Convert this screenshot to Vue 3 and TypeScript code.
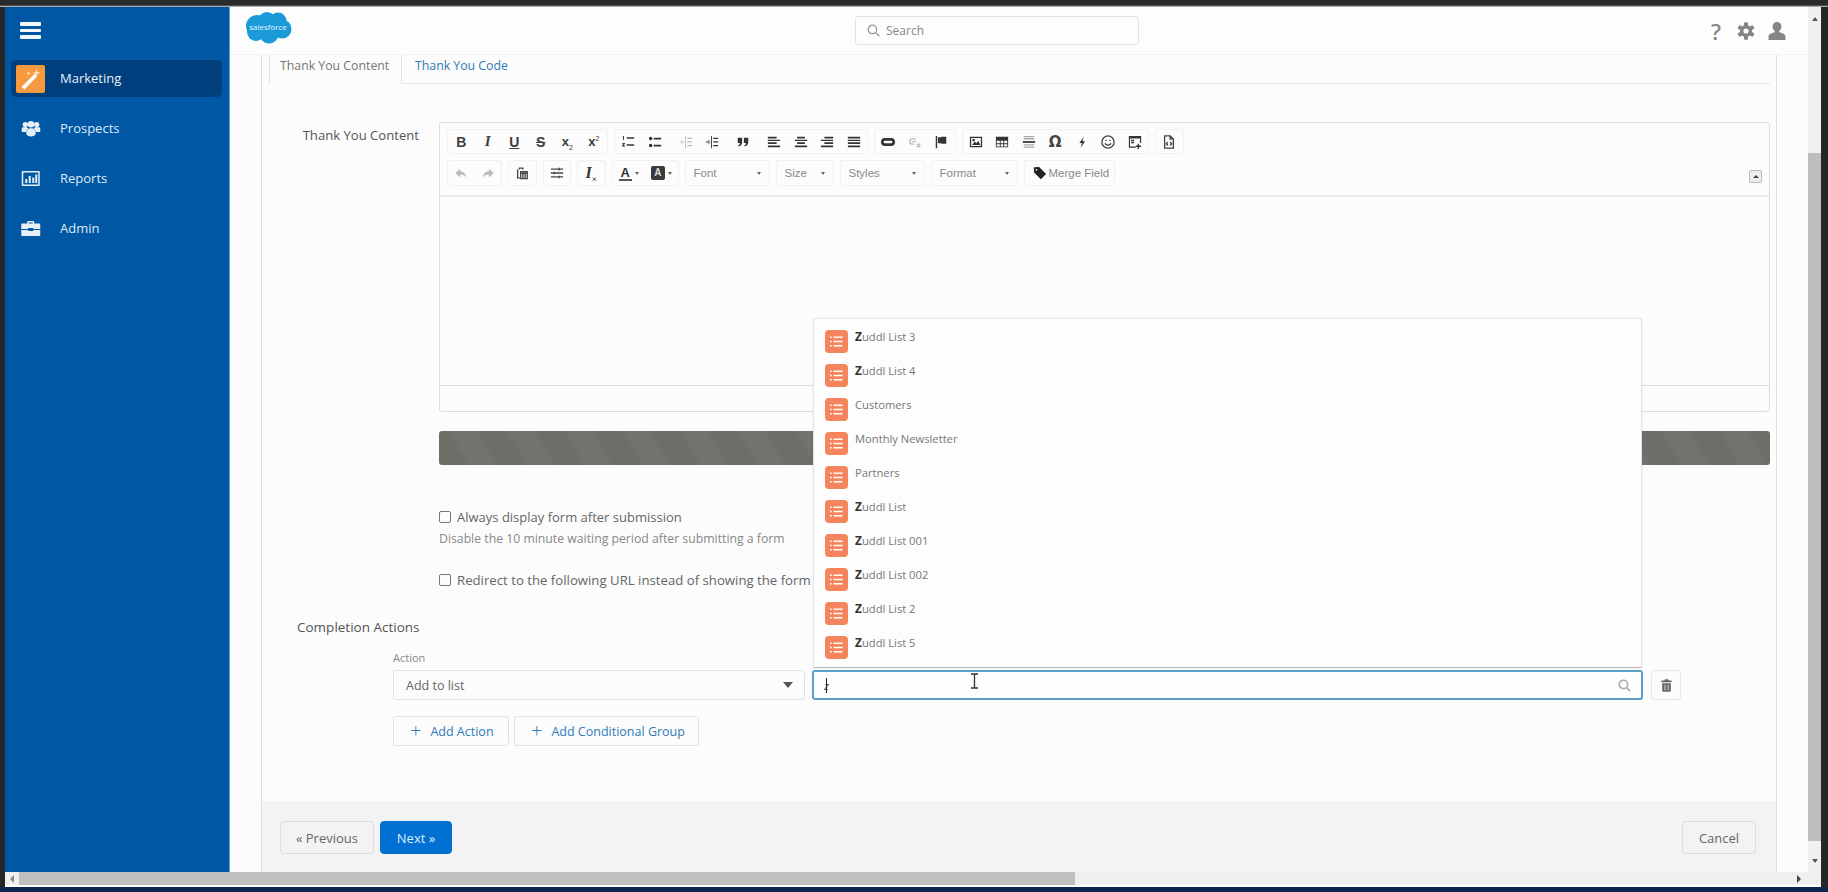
<script setup lang="ts">
interface Tool { t?: string; sub?: string; sup?: string; c?: string; d?: string; d2?: string; s?: boolean; dim?: boolean; sep?: boolean }

const undo = 'M7 3L1.5 8 7 13V10c3 0 5 .5 7 3-.5-4-3-7-7-7z'
const redo = 'M9 3l5.5 5L9 13V10c-3 0-5 .5-7 3 .5-4 3-7 7-7z'

const row1: Tool[][] = [
  [
    { t: 'B', c: 'bold' }, { t: 'I', c: 'ital' }, { t: 'U', c: 'under' }, { t: 'S', c: 'strike' },
    { t: 'x', sub: '2', c: 'scr' }, { t: 'x', sup: '2', c: 'scr' }
  ],
  [
    { d: 'M6.5 2.5h8.5v1.7H6.5zM6.5 10.5h8.5v1.7H6.5zM2.2 1h1.2v4.5H2.2zM1.3 9h3.2v1L2.8 12h1.8v1H1.2v-1l1.8-2H1.3z' },
    { d: 'M6.5 3h8.5v2H6.5zM6.5 11h8.5v2H6.5zM3 2a2 2 0 1 1 0 4 2 2 0 0 1 0-4zM3 10a2 2 0 1 1 0 4 2 2 0 0 1 0-4z' },
    { sep: true, dim: true, d: 'M7 1h1v14H7zM1 7.5h5v1H1zM9.5 3h5.5v1.5H9.5zM9.5 7.2h5.5v1.5H9.5zM9.5 11.4h5.5v1.5H9.5zM1 8l2.5-2.5v5z' },
    { d: 'M7 1h1v14H7zM1 7.5h5v1H1zM9.5 3h5.5v1.5H9.5zM9.5 7.2h5.5v1.5H9.5zM9.5 11.4h5.5v1.5H9.5zM6.5 8L4 5.5v5z' },
    { sep: true, d: 'M2 3h5v5c0 3-2 5-4 5l-.6-1c1.4-.6 2-1.6 2-3H2zM9 3h5v5c0 3-2 5-4 5l-.6-1c1.4-.6 2-1.6 2-3H9z' },
    { sep: true, d: 'M1 2h10v2H1zM1 5.4h14v1.4H1zM1 8.2h10v2H1zM1 12h14v2H1z' },
    { d: 'M3.5 2h9v2h-9zM1 5.4h14v1.4H1zM3.5 8.2h9v2h-9zM1 12h14v2H1z' },
    { d: 'M5 2h10v2H5zM1 5.4h14v1.4H1zM5 8.2h10v2H5zM1 12h14v2H1z' },
    { d: 'M1 2h14v2H1zM1 5.4h14v1.4H1zM1 8.2h14v2H1zM1 12h14v2H1z' }
  ],
  [
    { d: 'M4.5 3.5h7a4.5 4.5 0 0 1 0 9h-7a4.5 4.5 0 0 1 0-9zM4.5 6.500a1.500 1.500 0 0 0 0 3h7a1.500 1.500 0 0 0 0-3z' },
    { s: true, dim: true, d: 'M9 4.500H5a3 3 0 0 0 0 6h2M5 7.500h4M10 10l4 4M14 10l-4 4' },
    { d: 'M2 1h1.600v14H2zM4.500 2.500h4V2H14v8H8.500v-.5h-4z' }
  ],
  [
    { d: 'M1 2h14v12H1zM2.500 3.500v9h11v-9zM3.500 11.500l3-4 2 2 2-3 2.500 5zM4 4.500h2.500V7H4z' },
    { d: 'M1 2h14v12H1zM2 6.500v3h3.500v-3zM6.500 6.500v3h3v-3zM10.500 6.500v3H14v-3zM2 10.500V13h3.500v-2.500zM6.500 10.500V13h3v-2.500zM10.500 10.500V13H14v-2.500z' },
    { d: 'M1 7h14v2H1z', d2: 'M2 1h12v1.500H2zM2 3.500h12V5H2zM2 10.500h12V12H2zM2 13h12v1.500H2z' },
    { t: 'Ω', c: 'omega' },
    { d: 'M10 2L5 9h3l-1.600 5.500L11.500 7H8.400z' },
    { s: true, d: 'M8 1a7 7 0 1 0 0 14A7 7 0 0 0 8 1zM4.600 9.500c1 2.700 5.800 2.700 6.800 0M5.700 5.500v1.400M10.300 5.500v1.400' },
    { d: 'M1 1h14v8h-1.300V4H2.300v9H9v1.500H1zM3.500 5.500H7V7H3.500zM3.500 8H7v1.500H3.500zM11 10h1.600v2H15v1.600h-2.400V16H11v-2.400H9V12h2z' }
  ],
  [
    { s: true, d: 'M3 1h6.500L13 4.500V15H3zM9.300 1v3.700H13M6.600 8L5 10l1.600 2M9.400 8L11 10l-1.600 2' }
  ]
]

const row2: Tool[][] = [
  [{ dim: true, d: undo }, { dim: true, d: redo }],
  [{ s: true, d: 'M3 4v9.500h2.500M5 4V2.500h4V4M6.500 6.500H14v8H6.500zM9 7v7M11.500 7v7M6.500 8.500H14' }],
  [{ s: true, d: 'M1 3.500h14M1 8h14M1 12.500h14M10.500 2v3M5 6.500v3M10.500 11v3' }],
  [{ t: 'I', sub: '×', c: 'clear' }]
]

const combos = [
  { label: 'Font', w: 85 },
  { label: 'Size', w: 58 },
  { label: 'Styles', w: 85 },
  { label: 'Format', w: 87 }
]

const nav = [
  { label: 'Prospects', d: 'M4 3a2.600 2.600 0 1 1 0 5.200A2.600 2.600 0 0 1 4 3zM15.500 3a2.600 2.600 0 1 1 0 5.200 2.600 2.600 0 0 1 0-5.200zM9.750 2a3.300 3.300 0 1 1 0 6.600 3.300 3.300 0 0 1 0-6.600zM.5 9.500c0-.8.8-1.200 1.800-1.200h3.400c.8.800 1.500 1.200 1.500 1.200-1.500.8-2.200 2-2.200 3.500H.5zM19 9.500c0-.8-.8-1.200-1.800-1.200h-3.400c-.8.800-1.500 1.200-1.500 1.200 1.500.8 2.200 2 2.200 3.500H19zM5 15c0-4 2-5.700 4.750-5.700S14.500 11 14.500 15c-.5 1.200-2.500 2.500-4.750 2.500S5.500 16.200 5 15z', e: false },
  { label: 'Reports', d: 'M1.500 2h16a1 1 0 0 1 1 1v13a1 1 0 0 1-1 1h-16a1 1 0 0 1-1-1V3a1 1 0 0 1 1-1zM2 3.500v12h15v-12zM4 10h2v4H4zM7.500 7h2v7h-2zM11 8.500h2V14h-2zM14 5.500h2V14h-2z', e: true },
  { label: 'Admin', d: 'M7 2h5a1 1 0 0 1 1 1v1.500h5a1 1 0 0 1 1 1V10H12V9H7v1H0V5.500a1 1 0 0 1 1-1h5V3a1 1 0 0 1 1-1zM7.500 3.400v1.100h4V3.400zM0 11h7v1h5v-1h7v5a1 1 0 0 1-1 1H1a1 1 0 0 1-1-1z', e: true }
]

const results = [
  { z: 'Z', rest: 'uddl List 3' },
  { z: 'Z', rest: 'uddl List 4' },
  { z: '', rest: 'Customers' },
  { z: '', rest: 'Monthly Newsletter' },
  { z: '', rest: 'Partners' },
  { z: 'Z', rest: 'uddl List' },
  { z: 'Z', rest: 'uddl List 001' },
  { z: 'Z', rest: 'uddl List 002' },
  { z: 'Z', rest: 'uddl List 2' },
  { z: 'Z', rest: 'uddl List 5' }
]
</script>

<template>
  <div class="frame">
    <div class="strip-top"></div>
    <div class="middle">
      <div class="app">
        <div class="upper">
          <aside class="sidebar">
            <div class="burger"><i></i><i></i><i></i></div>
            <div class="nav-item active">
              <span class="wand">
                <svg viewBox="0 0 28 28" width="29" height="28">
                  <path d="M5 22L18 9l2.500 2.500L8 24.500z" fill="#fff" />
                  <path d="M20 4l1 3 3 1-3 1-1 3-1-3-3-1 3-1zM12 6l.6 1.600 1.600.6-1.600.6-.6 1.600-.6-1.600-1.600-.6 1.600-.6z" fill="#ffe3c2" />
                </svg>
              </span>
              <span class="nav-label">Marketing</span>
            </div>
            <div v-for="n in nav" :key="n.label" class="nav-item">
              <span class="nav-icon">
                <svg viewBox="0 0 19.500 19" width="20" height="19"><path :d="n.d" :fill-rule="n.e ? 'evenodd' : 'nonzero'" fill="#e6eef7" /></svg>
              </span>
              <span class="nav-label">{{ n.label }}</span>
            </div>
          </aside>

          <div class="main-col">
            <header class="topbar">
              <svg class="logo" viewBox="0 0 48 33" width="48" height="33">
                <g fill="#1a9ad9">
                  <circle cx="13" cy="15" r="11" /><circle cx="23" cy="10" r="9" /><circle cx="34" cy="10" r="8.500" />
                  <circle cx="38" cy="18" r="9.500" /><circle cx="25" cy="23" r="9.500" /><circle cx="12" cy="21" r="9" />
                </g>
                <text x="24" y="19" text-anchor="middle" class="logo-text">salesforce</text>
              </svg>
              <div class="search">
                <svg viewBox="0 0 16 16" width="13" height="13"><path d="M6.700 1.500a5.200 5.200 0 1 0 0 10.400 5.200 5.200 0 0 0 0-10.400zM10.500 10.500L15 15" fill="none" stroke="#999" stroke-width="1.600" /></svg>
                <span>Search</span>
              </div>
              <div class="top-icons">
                <span class="help">?</span>
                <svg viewBox="0 0 18 18" width="18" height="18">
                  <g fill="#858585">
                    <rect x="7" y="0.300" width="4" height="17.400" rx="1" />
                    <rect x="7" y="0.300" width="4" height="17.400" rx="1" transform="rotate(60 9 9)" />
                    <rect x="7" y="0.300" width="4" height="17.400" rx="1" transform="rotate(120 9 9)" />
                  </g>
                  <circle cx="9" cy="9" r="4.800" fill="none" stroke="#858585" stroke-width="2.600" />
                  <circle cx="9" cy="9" r="2.600" fill="#fcfcfc" />
                </svg>
                <svg viewBox="0 0 18 18" width="18" height="18"><path d="M9 0a4.400 4.400 0 0 1 4.400 4.600c0 2-1 3.600-2.200 4.400v1.200c2.800.8 6.300 1.800 6.300 4.300V18H.5v-3.500c0-2.500 3.500-3.500 6.300-4.300V9c-1.200-.8-2.200-2.400-2.200-4.400A4.400 4.400 0 0 1 9 0z" fill="#858585" /></svg>
              </div>
            </header>

            <div class="scroller">
              <section class="panel">
                <div class="tabs">
                  <div class="tab active-tab">Thank You Content</div>
                  <div class="tab">Thank You Code</div>
                </div>

                <div class="form">
                  <div class="editor-row">
                    <label class="field-label">Thank You Content</label>
                    <div class="editor">
                      <div class="toolbar">
                        <div class="tb-row">
                          <div v-for="(g, gi) in row1" :key="gi" class="tb-group">
                            <div v-for="(b, bi) in g" :key="bi" class="tb-btn" :class="{ sep: b.sep }">
                              <svg v-if="b.d" viewBox="0 0 16 16" width="14" height="14" :class="{ dim: b.dim, line: b.s }">
                                <path v-if="b.d2" :d="b.d2" class="faint" />
                                <path :d="b.d" fill-rule="evenodd" />
                              </svg>
                              <span v-else :class="b.c">{{ b.t }}<sub v-if="b.sub">{{ b.sub }}</sub><sup v-if="b.sup">{{ b.sup }}</sup></span>
                            </div>
                          </div>
                        </div>
                        <div class="tb-row second">
                          <div v-for="(g, gi) in row2" :key="gi" class="tb-group">
                            <div v-for="(b, bi) in g" :key="bi" class="tb-btn" :class="{ sep: b.sep }">
                              <svg v-if="b.d" viewBox="0 0 16 16" width="14" height="14" :class="{ dim: b.dim, line: b.s }">
                                <path :d="b.d" fill-rule="evenodd" />
                              </svg>
                              <span v-else :class="b.c">{{ b.t }}<sub v-if="b.sub">{{ b.sub }}</sub></span>
                            </div>
                          </div>
                          <div class="tb-group colors">
                            <div class="color-btn"><span class="a-under">A</span><i class="mini-caret"></i></div>
                            <div class="color-btn"><span class="a-box">A</span><i class="mini-caret"></i></div>
                          </div>
                          <div v-for="c in combos" :key="c.label" class="tb-group combo" :style="{ width: c.w + 'px' }">
                            <span>{{ c.label }}</span><i class="mini-caret"></i>
                          </div>
                          <div class="tb-group merge">
                            <svg viewBox="0 0 16 16" width="14" height="14"><path d="M1 1.500l6-.5 8 8.200L9 15 1.200 7.500zM4 3.300a1 1 0 1 0 0 2 1 1 0 0 0 0-2z" fill="#222" fill-rule="evenodd" /></svg>
                            <span>Merge Field</span>
                          </div>
                        </div>
                        <div class="collapse"><i></i></div>
                      </div>
                      <div class="edit-area"></div>
                      <div class="edit-foot"></div>
                    </div>
                  </div>

                  <div class="stripe-bar"></div>

                  <div class="checks">
                    <div class="check-row"><span class="box"></span><span>Always display form after submission</span></div>
                    <div class="help-text">Disable the 10 minute waiting period after submitting a form</div>
                    <div class="check-row second-check"><span class="box"></span><span>Redirect to the following URL instead of showing the form</span></div>
                  </div>

                  <h3 class="section-title">Completion Actions</h3>

                  <div class="actions">
                    <div class="action-label">Action</div>
                    <div class="action-row">
                      <div class="select"><span>Add to list</span><i class="select-caret"></i></div>
                      <div class="lookup">
                        <span class="typed">z</span><i class="caret-bar"></i>
                        <svg class="lookup-icon" viewBox="0 0 16 16" width="13" height="13"><path d="M6.700 1.500a5.200 5.200 0 1 0 0 10.400 5.200 5.200 0 0 0 0-10.400zM10.500 10.500L15 15" fill="none" stroke="#aaa" stroke-width="2" /></svg>
                        <ul class="results">
                          <li v-for="(r, i) in results" :key="i">
                            <span class="list-icon">
                              <svg viewBox="0 0 23 23" width="23" height="23">
                                <path d="M8.500 6.500h9v1.600h-9zM8.500 10.700h9v1.600h-9zM8.500 14.900h9v1.600h-9zM5 6.500h1.800v1.600H5zM5 10.700h1.800v1.600H5zM5 14.900h1.800v1.600H5z" fill="#fff" />
                              </svg>
                            </span>
                            <span class="r-text"><b v-if="r.z">{{ r.z }}</b>{{ r.rest }}</span>
                          </li>
                        </ul>
                        <svg class="ibeam" viewBox="0 0 9 16" width="9" height="16"><path d="M1 1h7M1 15h7M4.500 1v14" fill="none" stroke="#333" stroke-width="1.300" /></svg>
                      </div>
                      <div class="trash">
                        <svg viewBox="0 0 14 16" width="11" height="13"><path d="M5 0h4l.6 1.500h3.900V4H.5V1.500h3.900zM1.500 5h11v10a1 1 0 0 1-1 1h-9a1 1 0 0 1-1-1zM4.500 7v7h1V7zM8.500 7v7h1V7z" fill="#666" fill-rule="evenodd" /></svg>
                      </div>
                    </div>
                    <div class="add-row">
                      <div class="add-btn add-a"><span class="plus">+</span>Add Action</div>
                      <div class="add-btn add-c"><span class="plus">+</span>Add Conditional Group</div>
                    </div>
                  </div>
                </div>

                <footer class="foot">
                  <div class="btn prev">« Previous</div>
                  <div class="btn next">Next »</div>
                  <div class="btn cancel">Cancel</div>
                </footer>
              </section>
            </div>
          </div>

          <div class="vscroll">
            <i class="arrow up"></i>
            <div class="v-thumb"></div>
            <i class="arrow down"></i>
          </div>
        </div>

        <div class="hscroll">
          <i class="arrow left"></i>
          <div class="h-thumb"></div>
          <i class="arrow right"></i>
        </div>
      </div>
    </div>
    <div class="strip-bottom"></div>
  </div>
</template>

<style scoped>
.frame {
  width: 1828px;
  height: 892px;
  display: flex;
  flex-direction: column;
  background: #262626;
  font-family: "Open Sans", "Noto Sans", sans-serif;
  overflow: hidden;
}
.strip-top { height: 7px; flex: none; background: linear-gradient(#2b2b2b 5px, #777 6px, #ddd 7px); }
.strip-bottom { height: 5px; flex: none; background: #0d2650; }
.middle { flex: 1; min-height: 0; display: flex; padding: 0 7px 0 5px; }
.app { flex: 1; min-width: 0; display: flex; flex-direction: column; background: #fcfcfc; }
.upper { flex: 1; min-height: 0; display: flex; }

.sidebar { width: 225px; flex: none; background: #0058a5; padding: 0 7px 0 6px; box-sizing: border-box; border-right: 1px solid #5ea2dc; }
.burger { height: 53px; padding: 15px 0 0 9px; box-sizing: border-box; display: flex; flex-direction: column; gap: 3px; }
.burger i { display: block; width: 21px; height: 3.5px; background: #f2f6fa; border-radius: 1px; }
.nav-item { height: 37px; margin-bottom: 13px; display: flex; align-items: center; padding-left: 5px; color: #dfeaf5; font-size: 13px; border-radius: 5px; }
.nav-item.active { background: #003f7d; color: #e8eff7; }
.wand { width: 29px; height: 28px; background: #f6993f; border-radius: 2px; display: flex; flex: none; }
.nav-icon { width: 29px; display: flex; justify-content: center; flex: none; }
.nav-label { margin: -2px 0 0 15px; }

.main-col { flex: 1; min-width: 0; display: flex; flex-direction: column; }
.topbar { height: 47px; flex: none; display: flex; align-items: center; padding: 0 22px 0 14px; border-bottom: 1px solid #f2f2f2; background: #fdfdfd; }
.logo { flex: none; margin-top: -7px; }
.logo-text { font-family: "Open Sans", sans-serif; font-size: 8px; fill: #e9f6fc; }
.search { width: 284px; height: 29px; box-sizing: border-box; margin-left: 563px; border: 1px solid #e3e3e3; border-radius: 3px; display: flex; align-items: center; padding-left: 11px; gap: 6px; font-size: 12px; color: #888; }
.top-icons { margin-left: auto; display: flex; align-items: center; gap: 13px; }
.help { font-size: 22px; font-weight: 600; color: #888; line-height: 1; width: 16px; text-align: center; }

.scroller { flex: 1; min-height: 0; padding: 0 31px; }
.panel { height: 100%; box-sizing: border-box; border-left: 1px solid #ddd; border-right: 1px solid #ddd; display: flex; flex-direction: column; }
.tabs { height: 29px; flex: none; box-sizing: border-box; margin: 0 6px 0 7px; display: flex; border-bottom: 1px solid #e5e5e5; font-size: 12.3px; white-space: nowrap; }
.tab { padding: 0 13px; line-height: 22px; color: #2e7bb8; height: 29px; box-sizing: border-box; }
.active-tab { color: #777; border-left: 1px solid #e2e2e2; border-right: 1px solid #e2e2e2; background: #fcfcfc; width: 133px; padding: 0 10px; }

.form { flex: 1; min-height: 0; padding: 38px 6px 0 0; display: flex; flex-direction: column; }
.editor-row { display: flex; }
.field-label { width: 157px; margin-right: 20px; text-align: right; font-size: 13.1px; color: #555; padding-top: 4px; flex: none; }
.editor { flex: 1; height: 290px; box-sizing: border-box; border: 1px solid #ddd; border-radius: 3px; display: flex; flex-direction: column; }
.toolbar { position: relative; height: 74px; flex: none; box-sizing: border-box; padding: 6px 0 0 7px; border-bottom: 2px solid #ececec; }
.tb-row { display: flex; gap: 6px; height: 25px; }
.tb-row.second { margin-top: 6px; height: 26px; gap: 6px; }
.tb-group { display: flex; align-items: center; border: 1px solid #f1f1f1; border-radius: 3px; box-sizing: border-box; height: 100%; }
.tb-btn { width: 26.5px; height: 100%; display: flex; align-items: center; justify-content: center; flex: none; color: #3c3c3c; }
.tb-btn.sep { margin-left: 4.5px; }
.tb-btn svg { fill: #333; }
.tb-btn svg.dim { fill: #bbb; }
.tb-btn svg.line { fill: none; stroke: #444; stroke-width: 1.5; }
.tb-btn svg.line.dim { fill: none; stroke: #bbb; stroke-width: 1.5; }
.faint { fill: #aaa; }
.bold, .under, .strike, .scr { font-family: "Liberation Sans", sans-serif; font-weight: 700; font-size: 14px; }
.ital { font-family: "Liberation Serif", serif; font-style: italic; font-weight: 700; font-size: 15px; }
.under { text-decoration: underline; }
.strike { text-decoration: line-through; }
.scr { font-size: 13px; }
.scr sub, .scr sup { font-size: 7px; font-weight: 400; line-height: 0; }
.omega { font-family: "DejaVu Sans", sans-serif; font-size: 15px; font-weight: 700; color: #444; }
.clear { font-family: "Liberation Serif", serif; font-style: italic; font-weight: 700; font-size: 16px; color: #333; }
.clear sub { font-size: 9px; font-style: normal; line-height: 0; }
.colors { width: 67px; }
.color-btn { width: 32.5px; display: flex; align-items: center; justify-content: center; gap: 3px; }
.a-under { font-family: "Liberation Sans", sans-serif; font-weight: 700; font-size: 13px; line-height: 13px; color: #333; border-bottom: 2px solid #555; padding: 0 2px; }
.a-box { font-family: "Liberation Sans", sans-serif; font-weight: 700; font-size: 10px; width: 14px; height: 14px; background: #3a3a3a; color: #ddd; border-radius: 2px; text-align: center; line-height: 14px; }
.mini-caret { display: block; width: 0; height: 0; border-left: 2.5px solid transparent; border-right: 2.5px solid transparent; border-top: 3px solid #666; }
.combo { justify-content: space-between; padding: 0 8px; font-family: "Liberation Sans", sans-serif; font-size: 11.5px; color: #8a8a8a; }
.merge { width: 91px; padding-left: 8px; gap: 2px; font-family: "Liberation Sans", sans-serif; font-size: 11.5px; color: #8a8a8a; white-space: nowrap; }
.collapse { position: absolute; right: 7px; top: 47px; width: 13px; height: 13px; box-sizing: border-box; border: 1px solid #bbb; border-radius: 2px; background: #eee; display: flex; align-items: center; justify-content: center; }
.collapse i { width: 0; height: 0; border-left: 3px solid transparent; border-right: 3px solid transparent; border-bottom: 3px solid #444; }
.edit-area { flex: 1; }
.edit-foot { height: 25px; flex: none; border-top: 1px solid #ddd; }

.stripe-bar { flex: none; margin: 19px 0 0 177px; height: 34px; border-radius: 3px; background: repeating-linear-gradient(60deg, #6e6d68 0 26px, #73726d 26px 50px); }

.checks { margin: 42px 0 0 177px; font-size: 13px; color: #666; }
.check-row { display: flex; align-items: center; gap: 6px; height: 20px; white-space: nowrap; }
.box { width: 12px; height: 12px; box-sizing: border-box; border: 1px solid #777; border-radius: 2px; flex: none; }
.help-text { font-size: 12.25px; color: #888; margin-top: 2px; line-height: 20px; white-space: nowrap; }
.second-check { margin-top: 21px; font-size: 13.2px; }

.section-title { margin: 27px 0 0 35px; font-size: 13.5px; font-weight: 400; color: #555; line-height: 20px; }
.actions { margin: 13px 0 0 131px; }
.action-label { font-size: 11px; color: #888; line-height: 16px; }
.action-row { display: flex; margin-top: 4px; height: 30px; }
.select { width: 412px; box-sizing: border-box; border: 1px solid #e2e2e2; border-radius: 3px; display: flex; align-items: center; justify-content: space-between; padding: 0 11px 0 12px; font-size: 12.5px; color: #666; }
.select-caret { width: 0; height: 0; border-left: 5px solid transparent; border-right: 5px solid transparent; border-top: 6px solid #555; }
.lookup { position: relative; width: 831px; margin-left: 7px; box-sizing: border-box; border: 2px solid #5c9fc9; border-radius: 3px; display: flex; align-items: center; padding-left: 10px; background: #fefefe; }
.typed { font-size: 11px; color: #444; font-style: italic; }
.caret-bar { width: 1px; height: 15px; background: #222; margin-left: -3px; }
.lookup-icon { position: absolute; right: 10px; top: 7px; }
.results { position: absolute; left: -1px; right: -1px; bottom: 30px; height: 350px; box-sizing: border-box; margin: 0; padding: 11px 0 0 11px; list-style: none; background: #fdfdfd; border: 1px solid #e4e4e4; border-bottom-color: #bbb; border-radius: 3px 3px 0 0; box-shadow: 0 0 3px rgba(0,0,0,.08); }
.results li { height: 34px; display: flex; align-items: flex-start; }
.list-icon { width: 23px; height: 23px; background: #f6845c; border-radius: 4px; flex: none; display: flex; }
.r-text { margin: -1px 0 0 7px; font-size: 11.2px; line-height: 16px; color: #777; }
.r-text b { font-size: 12px; color: #333; font-weight: 700; }
.ibeam { position: absolute; left: 156px; top: 1px; }
.trash { width: 30px; margin-left: 8px; box-sizing: border-box; border: 1px solid #e8e8e8; border-radius: 3px; display: flex; align-items: center; justify-content: center; }
.add-row { display: flex; gap: 5px; margin-top: 16px; }
.add-btn { height: 30px; box-sizing: border-box; border: 1px solid #e2e2e2; border-radius: 3px; display: flex; align-items: center; font-size: 12.5px; color: #2e7bb8; padding-left: 16px; }
.add-a { width: 116px; }
.add-c { width: 185px; }
.plus { font-size: 20px; line-height: 20px; margin-right: 9px; font-weight: 300; color: #2e7bb8; }

.foot { height: 70px; flex: none; box-sizing: border-box; background: #f3f3f3; border-top: 1px solid #eee; display: flex; align-items: flex-start; padding: 18px 20px 0 18px; gap: 6px; }
.btn { height: 33px; box-sizing: border-box; border: 1px solid #ddd; border-radius: 4px; display: flex; align-items: center; justify-content: center; font-size: 13px; color: #666; }
.prev { width: 94px; }
.next { width: 72px; background: #0070d2; border-color: #0070d2; color: #dfeefa; }
.cancel { width: 74px; margin-left: auto; }

.vscroll { width: 13px; flex: none; background: #f0f0f0; display: flex; flex-direction: column; align-items: center; }
.v-thumb { width: 100%; height: 688px; margin-top: 132px; background: #bdbdbd; }
.arrow { display: block; width: 0; height: 0; flex: none; }
.arrow.up { margin-top: 10px; border-left: 3.5px solid transparent; border-right: 3.5px solid transparent; border-bottom: 4px solid #555; }
.arrow.down { margin-top: 18px; border-left: 3.5px solid transparent; border-right: 3.5px solid transparent; border-top: 4px solid #555; }
.hscroll { height: 15px; flex: none; box-sizing: border-box; border-bottom: 2px solid #fff; background: #efefef; display: flex; align-items: center; padding: 0 20px 0 5px; }
.arrow.left { border-top: 4px solid transparent; border-bottom: 4px solid transparent; border-right: 4px solid #888; }
.arrow.right { margin-left: auto; border-top: 4px solid transparent; border-bottom: 4px solid transparent; border-left: 4px solid #444; }
.h-thumb { width: 1056px; height: 100%; margin-left: 5px; background: #bfbfbd; }
</style>
